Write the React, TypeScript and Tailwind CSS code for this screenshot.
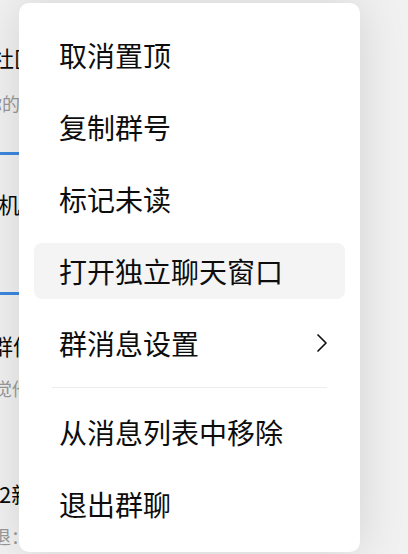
import React from "react";

const items = ["取消置顶", "复制群号", "标记未读", "打开独立聊天窗口", "群消息设置"];

function Chevron() {
    return (
        <svg width="12" height="20" viewBox="0 0 12 20" fill="none" stroke="#111" strokeWidth="1.7" strokeLinecap="round" strokeLinejoin="round">
            <path d="M2 2l8 8-8 8" />
        </svg>
    );
}

export default function App() {
    return (
        <div className="relative w-[408px] h-[554px] overflow-hidden bg-[#f1f1f1] font-['Noto_Sans_CJK_SC','Noto_Sans',sans-serif]">
            {/* chat list behind the menu, only a sliver shows */}
            <div className="flex flex-col w-[19px] overflow-hidden whitespace-nowrap">
                <div className="h-[152px] pt-[42px] flex flex-col">
                    <div className="-ml-[8px] text-[22px] leading-[30px] text-[#0a0a0a]">社区</div>
                    <div className="-ml-[16px] mt-[18px] text-[18px] leading-[26px] text-[#999]">你的</div>
                </div>
                <div className="h-[143px] border-y-[3px] border-[#3d87e0] pt-[33px]">
                    <div className="-ml-[2px] text-[22px] leading-[30px] text-[#0a0a0a]">机</div>
                </div>
                <div className="h-[140px] pt-[35px] flex flex-col">
                    <div className="-ml-[9px] text-[22px] leading-[30px] text-[#0a0a0a]">群信</div>
                    <div className="-ml-[6px] mt-[15px] text-[18px] leading-[26px] text-[#999]">觉他</div>
                </div>
                <div className="pt-[43px] flex flex-col">
                    <div className="-ml-[1px] text-[22px] leading-[30px] text-[#0a0a0a]">2新</div>
                    <div className="-ml-[7px] mt-[15px] text-[18px] leading-[26px] text-[#999]">退：</div>
                </div>
            </div>

            {/* context menu */}
            <div className="absolute left-[19px] top-[3px] w-[341px] h-[549px] bg-white rounded-[10px] shadow-[0_0_48px_rgba(0,0,0,0.13)]">
                <div className="flex flex-col gap-4 pt-[24px] px-[15px]">
                    {items.map((label) => (
                        <div
                            key={label}
                            className={
                                label === "打开独立聊天窗口"
                                    ? "h-[56px] flex items-center justify-between pl-[25px] pr-[17px] rounded-[8px] bg-[#f4f4f4] text-[28px] text-[#0d0d0d]"
                                    : "h-[56px] flex items-center justify-between pl-[25px] pr-[17px] rounded-[8px] text-[28px] text-[#0d0d0d]"
                            }
                        >
                            <span>{label}</span>
                            {label === "群消息设置" && <Chevron />}
                        </div>
                    ))}
                    <div className="mx-[18px] h-px bg-[#ececec]" />
                    <div className="h-[56px] flex items-center pl-[25px] rounded-[8px] text-[28px] text-[#0d0d0d]">从消息列表中移除</div>
                    <div className="h-[56px] flex items-center pl-[25px] rounded-[8px] text-[28px] text-[#0d0d0d]">退出群聊</div>
                </div>
            </div>
        </div>
    );
}
